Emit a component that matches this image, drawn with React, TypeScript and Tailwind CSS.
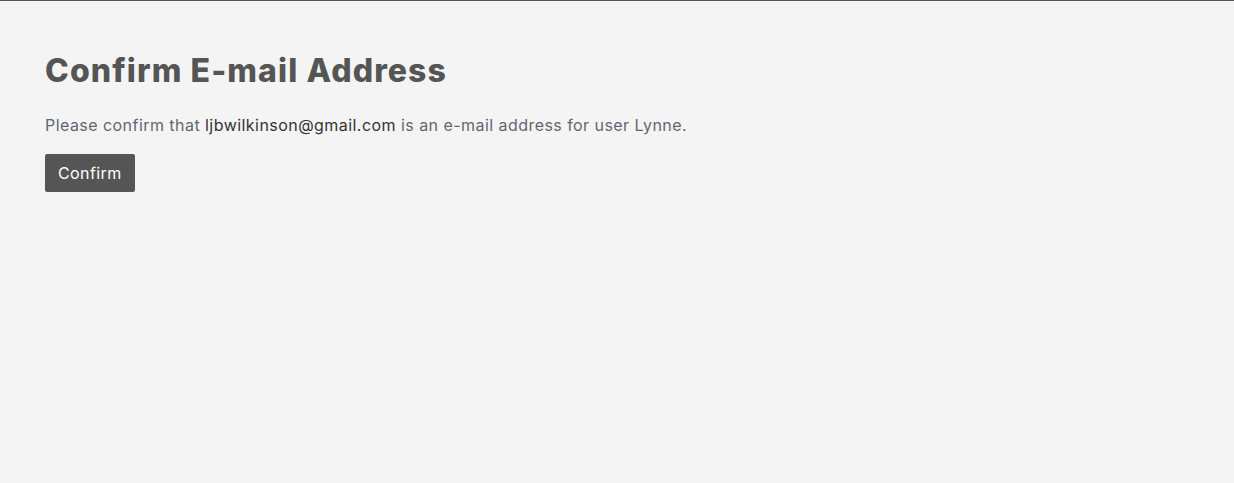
import React from "react";

const App: React.FC = () => {
  return (
    <div className="min-h-[483px] bg-[#f4f4f4] border-t border-[#555] font-['Inter','Noto_Sans',sans-serif]">
      <div className="px-[45px] pt-[48px]">
        <h1 className="text-[32px] leading-[44px] font-extrabold text-[#555] tracking-[1.1px]">
          Confirm E-mail Address
        </h1>
        <p className="mt-[20px] text-[16px] leading-[24px] text-[#5f6772] tracking-[0.45px]">
          Please confirm that <span className="text-[#333]">ljbwilkinson@gmail.com</span> is an e-mail
          address for user Lynne.
        </p>
        <button className="mt-[17px] h-[38px] px-[13px] bg-[#555] text-white text-[16px] tracking-[0.4px] rounded-[2px]">
          Confirm
        </button>
      </div>
    </div>
  );
};

export default App;
